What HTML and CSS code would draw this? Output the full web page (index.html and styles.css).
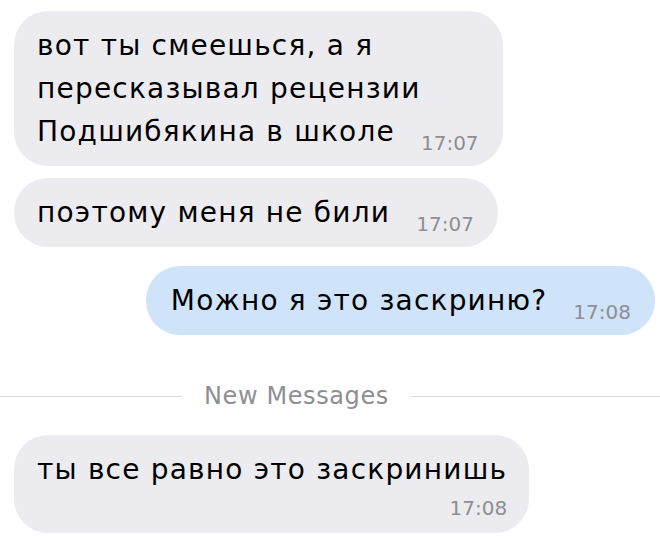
FILE: index.html
```html
<!DOCTYPE html>
<html>
<head>
	<meta charset="utf-8">
	<title>Чат</title>
	<link rel="stylesheet" href="styles.css">
</head>
<body>
	<div class="chat">
		<div class="msg in"><span class="text">вот ты смеешься, а я<br>пересказывал рецензии<br>Подшибякина в школе</span><span class="time">17:07</span></div>
		<div class="msg in"><span class="text">поэтому меня не били</span><span class="time">17:07</span></div>
		<div class="msg out"><span class="text">Можно я это заскриню?</span><span class="time">17:08</span></div>

		<div class="divider"><span>New Messages</span></div>

		<div class="msg in stacked"><span class="text">ты все равно это заскринишь</span><span class="time">17:08</span></div>
	</div>
</body>
</html>
```

FILE: styles.css
```css
*{
	margin: 0;
	padding: 0;
	box-sizing: border-box;
}
body{
	background: #fff;
	font-family: "DejaVu Sans", "Liberation Sans", sans-serif;
	color: #000;
}
.chat{
	display: flex;
	flex-direction: column;
	align-items: flex-start;
	padding: 11px 5px 0 14px;
}
.msg{
	width: fit-content;
	padding: 13px 24px 13px 23px;
	border-radius: 34px;
	background: #ececf0;
	margin-bottom: 12px;
	font-size: 28px;
	line-height: 43px;
}
.msg .text{
	letter-spacing: 1.2px;
}
.msg .time{
	display: inline-block;
	font-size: 20px;
	line-height: 14px;
	vertical-align: -9px;
	color: #8e8e93;
	margin-left: 26px;
}
.out{
	align-self: flex-end;
	background: #cfe3fa;
	margin-top: 7px;
	padding-left: 25px;
}
.stacked{
	padding-right: 22px;
	padding-bottom: 15px;
}
.stacked .time{
	display: block;
	text-align: right;
	line-height: 20px;
	margin: 7px 0 0;
}
.divider{
	align-self: stretch;
	display: flex;
	align-items: center;
	gap: 22px;
	margin: 35px -5px 25px -14px;
	color: #8e8e93;
	font-size: 24px;
	line-height: 28px;
	letter-spacing: 0.6px;
}
.divider::before,
.divider::after{
	content: "";
	height: 1px;
	background: #dcdce0;
}
.divider::before{
	width: 182px;
}
.divider::after{
	flex: 1;
}
```
